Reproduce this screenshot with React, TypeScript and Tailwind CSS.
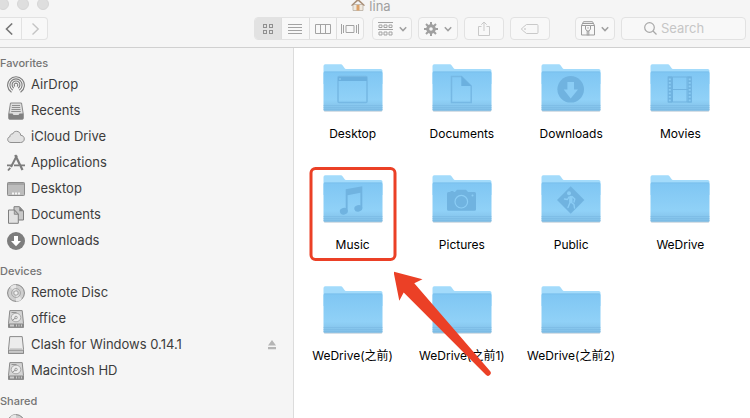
import { useId } from 'react'
import type { ReactNode } from 'react'

interface SidebarItem {
  label: string
  icon: ReactNode
  ejectable?: boolean
}

interface Folder {
  name: string
  glyph?: ReactNode
  highlighted?: boolean
}

function Icon({ children }: { children: ReactNode }) {
  return (
    <svg className="h-[18px] w-[18px] shrink-0" viewBox="0 0 18 18" fill="none" aria-hidden="true">
      {children}
    </svg>
  )
}

const airdropIcon = (
  <Icon>
    <g stroke="#7c7c7c" strokeWidth="1.1" strokeLinecap="round">
      <path d="M4.2 16A8.4 8.4 0 1 1 13.8 16" />
      <path d="M5.3 13.8A6.1 6.1 0 1 1 12.7 13.8" />
      <path d="M6.5 11.9A3.9 3.9 0 1 1 11.5 11.9" />
      <path d="M7.7 10.2A1.8 1.8 0 1 1 10.3 10.2" />
    </g>
  </Icon>
)

const recentsIcon = (
  <Icon>
    <path d="M3.5 1h11l1.6 10v5.2a.8.8 0 0 1-.8.8H2.7a.8.8 0 0 1-.8-.8V11z" fill="#dedede" stroke="#8a8a8a" />
    <path d="M1.5 11.500h4l1 1.500h5l1-1.500h4v5a1 1 0 0 1-1 1h-13a1 1 0 0 1-1-1z" fill="#808080" />
    <path d="M5 3.500h8M4.800 5.500h8.400M4.500 7.500h9M4.200 9.500h9.600" stroke="#8f8f8f" />
  </Icon>
)

const cloudIcon = (
  <Icon>
    <path
      d="M4 14.500C2 14.500.7 13.200.7 11.500c0-1.500 1-2.600 2.300-2.800-.1-1.800 1.100-2.900 2.600-2.700C6.400 4.200 7.700 3.300 9.500 3.300c2.300 0 4.100 1.700 4.200 4 2 0 3.600 1.500 3.600 3.600s-1.600 3.600-3.700 3.600z"
      fill="#e2e2e2"
      stroke="#868686"
      strokeWidth="0.9"
    />
  </Icon>
)

const applicationsIcon = (
  <Icon>
    <g stroke="#7c7c7c">
      <path d="M9.9 1.500 4 13" strokeWidth="2" />
      <path d="M8.200 1 15.500 16" strokeWidth="2.200" />
      <path d="M0 11.300h5.500M7 11.300h5M14 11.300h4" strokeWidth="1.800" />
      <path d="M3.300 13.800 1 16.500" strokeWidth="1.800" />
    </g>
  </Icon>
)

const desktopIcon = (
  <Icon>
    <rect x="0.5" y="2.5" width="17" height="13" rx="0.8" fill="#bdbdbd" stroke="#8c8c8c" />
    <path d="M1 4h16" stroke="#8c8c8c" />
    <path d="M5 13.500h2M8 13.500h2M11 13.500h2" stroke="#f5f5f5" strokeWidth="2" />
  </Icon>
)

const documentsIcon = (
  <Icon>
    <path d="M7 .7h5.500L16.500 5v9H7z" fill="#c9c9c9" stroke="#7f7f7f" />
    <path d="M12.300.7V5.200h4.200z" fill="#7f7f7f" />
    <path d="M1.500 4h6l3.800 4v9.300H1.500z" fill="#e2e2e2" stroke="#7f7f7f" />
    <path d="M7.300 4v4.300h4z" fill="#bbb" stroke="#7f7f7f" strokeWidth="0.8" />
  </Icon>
)

const downloadsIcon = (
  <Icon>
    <circle cx="9" cy="9" r="9" fill="#7d7d7d" />
    <path d="M7 4h4v5h3L9 14.300 4 9h3z" fill="#fff" />
  </Icon>
)

const discIcon = (
  <Icon>
    <circle cx="9" cy="9" r="8.4" fill="#cfcfcf" stroke="#858585" />
    <path d="M9 9 3 3a8.400 8.400 0 0 1 6-2.500zM9 9l6 6a8.400 8.400 0 0 1-6 2.500z" fill="#e6e6e6" />
    <circle cx="9" cy="9" r="4.5" stroke="#9d9d9d" strokeWidth="0.8" />
    <circle cx="9" cy="9" r="2.2" fill="#f1f1f1" stroke="#999" strokeWidth="0.9" />
  </Icon>
)

const hardDiskIcon = (
  <Icon>
    <path d="M2.800.6h12.400l1.300 12.900v3.900h-15v-3.900z" fill="#d4d4d4" stroke="#8a8a8a" />
    <path d="M1.500 13.500h15v4h-15z" fill="#8a8a8a" />
    <path d="M3 15.500h4M9 15.500h1M11.500 15.500h1M14 15.500h1" stroke="#ccc" strokeWidth="2" />
    <ellipse cx="9" cy="7.5" rx="4.8" ry="4.3" fill="#ececec" stroke="#a2a2a2" strokeWidth="0.9" />
    <circle cx="9" cy="7.5" r="1.3" stroke="#909090" strokeWidth="0.8" />
    <path d="M4.500 2.500h5M5 10.500l3.500-2.500" stroke="#939393" />
  </Icon>
)

const removableIcon = (
  <Icon>
    <path d="M2.800.6h12.400l1.300 12.900v3.900h-15v-3.900z" fill="#ececec" stroke="#8a8a8a" />
    <path d="M1.500 14.200h15v3.200h-15z" fill="#c9c9c9" stroke="#8a8a8a" />
    <path d="M3 13h12" stroke="#b5b5b5" />
  </Icon>
)

const sections: { title: string; items: SidebarItem[] }[] = [
  {
    title: 'Favorites',
    items: [
      { label: 'AirDrop', icon: airdropIcon },
      { label: 'Recents', icon: recentsIcon },
      { label: 'iCloud Drive', icon: cloudIcon },
      { label: 'Applications', icon: applicationsIcon },
      { label: 'Desktop', icon: desktopIcon },
      { label: 'Documents', icon: documentsIcon },
      { label: 'Downloads', icon: downloadsIcon },
    ],
  },
  {
    title: 'Devices',
    items: [
      { label: 'Remote Disc', icon: discIcon },
      { label: 'office', icon: hardDiskIcon },
      { label: 'Clash for Windows 0.14.1', icon: removableIcon, ejectable: true },
      { label: 'Macintosh HD', icon: hardDiskIcon },
    ],
  },
  { title: 'Shared', items: [{ label: '', icon: discIcon }] },
]

const folders: Folder[] = [
  {
    name: 'Desktop',
    glyph: (
      <>
        <rect x="15" y="12.5" width="29" height="26" rx="1" fill="none" stroke="#76b8e4" strokeWidth="1.5" />
        <path d="M15 13h29v4H15z" fill="#6bb0df" />
        <circle cx="17" cy="15" r="0.7" fill="#a1dbfb" />
      </>
    ),
  },
  {
    name: 'Documents',
    glyph: (
      <>
        <path d="M19.500 12.500h10l9.700 9.500v16.500H19.500z" fill="none" stroke="#76b8e4" strokeWidth="1.5" />
        <path d="M29.300 12v10h10z" fill="#6bb0df" />
      </>
    ),
  },
  {
    name: 'Downloads',
    glyph: (
      <>
        <circle cx="29.7" cy="25.3" r="13.3" fill="#70b3e0" />
        <path d="M26.400 18h6.600v7.500h4L29.700 34.500 22.700 25.500h3.700z" fill="#8bcdf5" />
      </>
    ),
  },
  {
    name: 'Movies',
    glyph: (
      <g fill="none" stroke="#70b3e0">
        <path d="M18 13h23.500M18 25.500h23.500M18 38h23.500M22.500 13v25M37 13v25" />
        <path d="M19.800 12.500v26M39.700 12.500v26" strokeWidth="4.4" />
        <path d="M19.800 14.500v23M39.700 14.500v23" stroke="#8bcdf5" strokeWidth="2" strokeDasharray="1.7 1.8" />
      </g>
    ),
  },
  {
    name: 'Music',
    highlighted: true,
    glyph: (
      <g fill="#70b3e0">
        <path d="M22.700 14.300 39.300 11.300V33.500H37.400V17.800L24.600 20.300V36.500H22.700z" />
        <ellipse cx="20.8" cy="36.2" rx="4" ry="3.3" transform="rotate(-15 20.8 36.2)" />
        <ellipse cx="35.3" cy="33.4" rx="4" ry="3.3" transform="rotate(-15 35.3 33.4)" />
      </g>
    ),
  },
  {
    name: 'Pictures',
    glyph: (
      <>
        <path
          d="M16.500 17h2v-1h3v1h1.500l2-2.300h9l2 2.300h6.500a1.500 1.500 0 0 1 1.500 1.500v15.800a1.500 1.500 0 0 1-1.500 1.500h-26a1.500 1.500 0 0 1-1.500-1.500V18.500A1.500 1.500 0 0 1 16.500 17z"
          fill="#70b3e0"
        />
        <circle cx="29.3" cy="26.7" r="6.3" fill="none" stroke="#8bcdf5" strokeWidth="1.2" />
        <circle cx="40.5" cy="20.5" r="1" fill="#8bcdf5" />
      </>
    ),
  },
  {
    name: 'Public',
    glyph: (
      <>
        <path d="M29.700 11.300 43.400 25 29.700 38.700 16 25z" fill="#70b3e0" />
        <circle cx="28" cy="18.3" r="2" fill="#8bcdf5" />
        <g fill="none" stroke="#8bcdf5" strokeLinecap="round" strokeLinejoin="round">
          <path d="M29.800 22.500v4" strokeWidth="3.4" />
          <path d="M29 27.500 27 32.500M30.500 27.500l2.500 2 .5 3.500M28 22l-1.500 2.500-3-.5M31 21.500l2.800 2.500-.8 3" strokeWidth="1.4" />
        </g>
      </>
    ),
  },
  { name: 'WeDrive' },
  { name: 'WeDrive(之前)' },
  { name: 'WeDrive(之前1)' },
  { name: 'WeDrive(之前2)' },
]

function FolderIcon({ glyph }: { glyph?: ReactNode }) {
  const id = useId()
  return (
    <svg className="h-12 w-[60px]" viewBox="0 0 60 48" aria-hidden="true">
      <defs>
        <linearGradient id={id} x1="0" y1="0" x2="0" y2="1">
          <stop offset="0" stopColor="#7fc6f3" />
          <stop offset="0.72" stopColor="#90d1f7" />
          <stop offset="1" stopColor="#80bee6" />
        </linearGradient>
      </defs>
      <path d="M.8 45h58.500v1.500a1.200 1.200 0 0 1-1.200 1.200H2a1.200 1.200 0 0 1-1.200-1.200z" fill="#c9d5de" />
      <path d="M.5 2A1.800 1.800 0 0 1 2.300.2H17.500c1 0 1.500.3 2 1l2 2.800c.5.700 1 1 2 1H57.700A1.800 1.800 0 0 1 59.500 6.800V20H.5z" fill="#a3dbfb" />
      <path d="M.5 9A1.500 1.500 0 0 1 2 7.500H58A1.500 1.500 0 0 1 59.500 9V45.500A1.200 1.200 0 0 1 58.300 46.700H1.700A1.200 1.200 0 0 1 .5 45.500z" fill={`url(#${id})`} />
      <path d="M1 8h58" stroke="#79bde9" strokeWidth="0.7" />
      <path d="M.5 41.500h59M.5 43.500h59M.5 45.700h59" stroke="#79b9e3" strokeWidth="0.6" />
      {glyph}
    </svg>
  )
}

// Red frame and arrow drawn over the folder that the reader should open
function Callout() {
  return (
    <>
      <span className="pointer-events-none absolute -top-2 left-1/2 h-[94px] w-[87px] -translate-x-1/2 rounded-md border-[3px] border-[#eb4026]" />
      <svg
        className="pointer-events-none absolute top-24 left-24 z-10 h-[106px] w-[100px]"
        viewBox="0 0 100 106"
        aria-hidden="true"
      >
        <path
          d="M-.5.5 28.500 8.200 20.300 12.200 96 100a2.800 2.800 0 0 1-4.200 3.800L9.700 21.500 5.300 29.800z"
          fill="#eb4026"
        />
      </svg>
    </>
  )
}

function Chevron() {
  return (
    <svg className="h-2 w-2" viewBox="0 0 8 8" fill="none" aria-hidden="true">
      <path d="M.8 2.200 4 5.600 7.200 2.200" stroke="#a0a0a0" strokeWidth="1.5" />
    </svg>
  )
}

const toolButton =
  'flex h-[23px] items-center justify-center gap-1.5 rounded border border-[#e2e2e2] bg-[#f8f8f8]'
const segment = 'flex h-full flex-1 items-center justify-center'

function Toolbar() {
  return (
    <div className="flex items-center pr-1">
      <div className="flex h-[23px] w-12 rounded-r border border-l-0 border-[#e2e2e2] bg-[#f8f8f8]">
        <button className="flex w-[22px] items-center border-r border-[#e2e2e2] pl-1" aria-label="Back">
          <svg className="h-3 w-3" viewBox="0 0 12 12" fill="none">
            <path d="M8.200.5 2.500 6l5.700 5.500" stroke="#777" strokeWidth="1.6" />
          </svg>
        </button>
        <button className="flex flex-1 items-center justify-center" aria-label="Forward">
          <svg className="h-3 w-3" viewBox="0 0 12 12" fill="none">
            <path d="M3.500.5 9.200 6 3.500 11.500" stroke="#c4c4c4" strokeWidth="1.4" />
          </svg>
        </button>
      </div>

      <div className="ml-[206px] flex h-[23px] w-[110px] divide-x divide-[#dedede] overflow-hidden rounded border border-[#e2e2e2] bg-[#f8f8f8]">
        <button className={`${segment} bg-[#e2e2e2]`} aria-label="Icon view">
          <svg className="h-3 w-3" viewBox="0 0 12 12" fill="none" stroke="#8f8f8f">
            <rect x="1.5" y="1.5" width="3" height="3" />
            <rect x="7.5" y="1.5" width="3" height="3" />
            <rect x="1.5" y="7.5" width="3" height="3" />
            <rect x="7.5" y="7.5" width="3" height="3" />
          </svg>
        </button>
        <button className={segment} aria-label="List view">
          <svg className="h-3 w-3.5" viewBox="0 0 14 12" stroke="#a3a3a3">
            <path d="M0 1.500h14M0 4.500h14M0 7.500h14M0 10.500h14" />
          </svg>
        </button>
        <button className={segment} aria-label="Column view">
          <svg className="h-3 w-4" viewBox="0 0 16 12" fill="none" stroke="#a3a3a3">
            <path d="M.5 1.500h15v9H.5zM5.500 1.500v9M10.500 1.500v9" />
          </svg>
        </button>
        <button className={segment} aria-label="Gallery view">
          <svg className="h-3 w-[18px]" viewBox="0 0 18 12" fill="none" stroke="#a3a3a3">
            <path d="M.5 1v10M2.500 2v8M5 2.500h8v7H5zM15.500 2v8M17.500 1v10" />
          </svg>
        </button>
      </div>

      <button className={`${toolButton} ml-2 w-10`} aria-label="Arrange">
        <svg className="h-3.5 w-[15px]" viewBox="0 0 15 14" fill="none" stroke="#a3a3a3">
          <path d="M0 .5h15M0 7.500h15" />
          <path d="M1 3h3v2.500H1zM6 3h3v2.500H6zM11 3h3v2.500h-3zM1 10h3v3H1zM6 10h3v3H6zM11 10h3v3h-3z" />
        </svg>
        <Chevron />
      </button>
      <button className={`${toolButton} ml-1.5 w-10`} aria-label="Actions">
        <svg className="h-3.5 w-3.5" viewBox="0 0 14 14" fill="none" stroke="#a0a0a0">
          <circle cx="7" cy="7" r="3.3" strokeWidth="3" />
          <path d="M7 0v3M7 11v3M0 7h3M11 7h3M2 2l2.200 2.200M9.800 9.800 12 12M12 2 9.800 4.200M4.200 9.800 2 12" strokeWidth="2" />
        </svg>
        <Chevron />
      </button>
      <button className={`${toolButton} ml-1.5 w-10`} aria-label="Share">
        <svg className="h-4 w-3" viewBox="0 0 12 16" fill="none" stroke="#c9c9c9">
          <path d="M3.500 5.500H.5v9h11v-9h-3M6 10V1M3.300 3.700 6 1l2.700 2.700" />
        </svg>
      </button>
      <button className={`${toolButton} ml-1.5 w-10`} aria-label="Edit tags">
        <svg className="h-3 w-[18px]" viewBox="0 0 18 12" fill="none" stroke="#c9c9c9">
          <path d="M5.500 1.500h10.500a1 1 0 0 1 1 1v7a1 1 0 0 1-1 1H5.500L1.200 7a1.200 1.200 0 0 1 0-2z" />
          <circle cx="4" cy="6" r="0.5" />
        </svg>
      </button>
      <button className={`${toolButton} ml-[25px] w-10`} aria-label="Archive">
        <svg className="h-[15px] w-3.5" viewBox="0 0 14 15" fill="none" stroke="#9c9c9c">
          <path d="M.5 4.500 2.500.7h9l2 3.800v9.500H.5zM.5 4.500h4M9.500 4.500h4M2 2.500h10" />
          <path d="M4.500 4.500h5v3.500l-1.500 2H6l-1.500-2zM6.200 10v4.500M7.800 10v4.500M7 6.200v1.500" />
        </svg>
        <Chevron />
      </button>
      <label className="ml-1.5 flex h-[23px] min-w-0 flex-1 items-center gap-1 rounded border border-[#e2e2e2] bg-[#f8f8f8] pl-[22px]">
        <svg className="h-[13px] w-[13px] shrink-0" viewBox="0 0 13 13" fill="none" stroke="#a8a8a8" strokeWidth="1.2">
          <circle cx="5.5" cy="5.5" r="4.8" />
          <path d="m9 9 3.500 3.500" />
        </svg>
        <input
          type="search"
          placeholder="Search"
          aria-label="Search"
          className="w-full min-w-0 bg-transparent text-[13px] outline-none placeholder:text-[#c6c6c6]"
        />
      </label>
    </div>
  )
}

function Header() {
  return (
    <header className="h-12 shrink-0 border-b border-[#d0d0d0] bg-[#f5f5f5]">
      <div className="grid h-[17px] grid-cols-[1fr_auto_1fr] items-start pr-2">
        <svg className="h-[11px] w-[50px]" viewBox="0 0 50 11" fill="#dedede" stroke="#d6d6d6" aria-hidden="true">
          <circle cx="3" cy="4" r="5.5" />
          <circle cx="23" cy="4" r="5.5" />
          <circle cx="43" cy="4" r="5.5" />
        </svg>
        <h1 className="flex items-start gap-1 text-[13px] leading-3 text-[#a0a0a0]">
          <svg className="h-[11px] w-3.5" viewBox="0 0 14 11" aria-hidden="true">
            <path d="M2 4.500h10v6H2z" fill="#f0e9df" stroke="#b8aea2" strokeWidth="0.8" />
            <path d="M0 5.200 5.500 0h3L14 5.200l-1 .8L7 1 1 6z" fill="#a98f78" />
            <path d="M5.500 5h3v5.500h-3z" fill="#dca067" />
          </svg>
          lina
        </h1>
      </div>
      <Toolbar />
    </header>
  )
}

function Sidebar() {
  return (
    <nav className="flex w-[294px] shrink-0 flex-col gap-2 border-r border-[#dcdcdc] bg-[#f5f5f5] pt-1.5" aria-label="Places">
      {sections.map((section) => (
        <section key={section.title}>
          <h2 className="text-[11px] leading-[18px] font-medium text-[#747474]">{section.title}</h2>
          <ul>
            {section.items.map((item) => (
              <li key={item.label} className="flex h-[26px] items-center justify-between pr-4 pl-[7px]">
                <a href="#" className="flex items-center gap-1.5 text-[13px] text-[#3c3c3c]" aria-label={item.label || 'Network'}>
                  {item.icon}
                  {item.label}
                </a>
                {item.ejectable && (
                  <button aria-label={`Eject ${item.label}`}>
                    <svg className="h-2.5 w-2.5" viewBox="0 0 10 10" fill="#b5b5b5">
                      <path d="M5 0 9 5.500H1zM1 7h8v2.200H1z" />
                    </svg>
                  </button>
                )}
              </li>
            ))}
          </ul>
        </section>
      ))}
    </nav>
  )
}

export default function App() {
  return (
    <div className="flex h-screen flex-col overflow-hidden bg-white font-['Inter','Noto_Sans_CJK_SC',sans-serif]">
      <Header />
      <div className="flex min-h-0 flex-1">
        <Sidebar />
        <main className="flex-1 pt-4 pr-[15px] pl-1">
          <ul className="grid grid-cols-[repeat(auto-fill,minmax(109px,1fr))] gap-y-[33px]">
            {folders.map((folder) => (
              <li key={folder.name} className="relative flex justify-center">
                <button className="flex flex-col items-center gap-3.5 text-xs whitespace-nowrap text-black">
                  <FolderIcon glyph={folder.glyph} />
                  <span className="h-4">{folder.name}</span>
                </button>
                {folder.highlighted && <Callout />}
              </li>
            ))}
          </ul>
        </main>
      </div>
    </div>
  )
}
